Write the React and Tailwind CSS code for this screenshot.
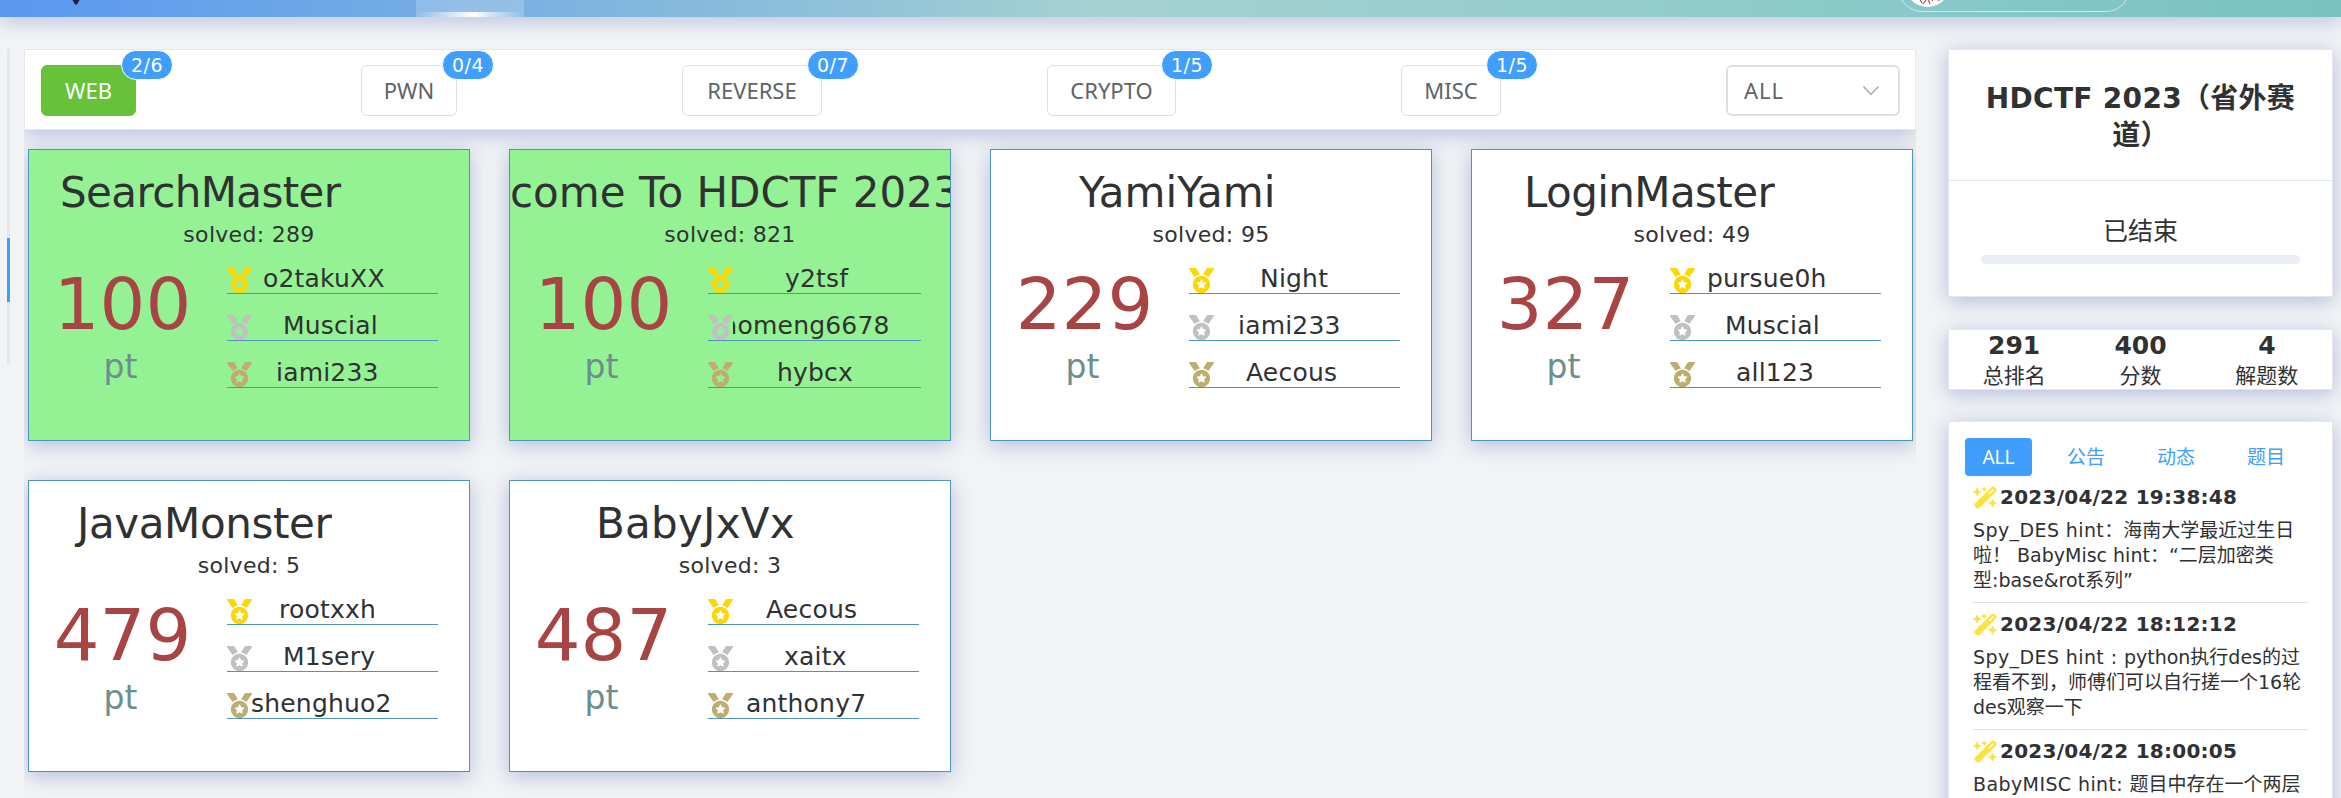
import { FaMedal } from "react-icons/fa";
import { FaWandMagicSparkles } from "react-icons/fa6";

const tabs = [
  { name: "WEB", count: "2/6", width: "w-[95px]", active: true },
  { name: "PWN", count: "0/4", width: "w-[96px]" },
  { name: "REVERSE", count: "0/7", width: "w-[140px]" },
  { name: "CRYPTO", count: "1/5", width: "w-[129px]" },
  { name: "MISC", count: "1/5", width: "w-[100px]" },
];

const challenges = [
  {
    title: "SearchMaster", place: "ml-[31px] tracking-[-0.6px]", solved: 289, points: 100, done: true,
    top: [["o2takuXX", "ml-[11px]"], ["Muscial", "ml-[31px]"], ["iami233", "ml-[24px]"]],
  },
  {
    title: "come To HDCTF 2023", place: "ml-0", solved: 821, points: 100, done: true, wide: true,
    top: [["y2tsf", "ml-[52px]"], ["aomeng6678", "-ml-[11px]"], ["hybcx", "ml-[44px]"]],
  },
  {
    title: "YamiYami", place: "ml-[88px]", solved: 95, points: 229,
    top: [["Night", "ml-[46px]"], ["iami233", "ml-[24px]"], ["Aecous", "ml-[32px]"]],
  },
  {
    title: "LoginMaster", place: "ml-[52px] tracking-[-0.6px]", solved: 49, points: 327,
    top: [["pursue0h", "ml-[12px]"], ["Muscial", "ml-[30px]"], ["all123", "ml-[41px]"]],
  },
  {
    title: "JavaMonster", place: "ml-[48px] tracking-[-0.4px]", solved: 5, points: 479,
    top: [["rootxxh", "ml-[27px]"], ["M1sery", "ml-[31px]"], ["shenghuo2", "-ml-px"]],
  },
  {
    title: "BabyJxVx", place: "ml-[86px] tracking-[0.25px]", solved: 3, points: 487,
    top: [["Aecous", "ml-[33px]"], ["xaitx", "ml-[51px]"], ["anthony7", "ml-[13px]"]],
  },
];

const medalColors = ["text-[#ffd700]", "text-[#c0c0c0]", "text-[#bfad6f]"];

const notices = [
  {
    time: "2023/04/22 19:38:48",
    lines: [["Spy_DES hint", "：海南大学最近过生日"], ["", "啦！ BabyMisc hint：“二层加密类"], ["", "型:base&rot系列”"]],
  },
  {
    time: "2023/04/22 18:12:12",
    lines: [["Spy_DES hint : ", "python执行des的过"], ["", "程看不到，师傅们可以自行搓一个16轮"], ["", "des观察一下"]],
  },
  {
    time: "2023/04/22 18:00:05",
    lines: [["BabyMISC hint: ", "题目中存在一个两层"]],
  },
];

const stats = [["291", "总排名"], ["400", "分数"], ["4", "解题数"]];

function Header() {
  return (
    <header className="relative z-10 h-[17px] shrink-0 bg-[linear-gradient(90deg,#5a97f0_0%,#8cbfda_34%,#a5d2d2_47%,#8ccaca_78%,#7ac1c1_100%)] shadow-[0_4px_20px_#b2bcdb]">
      <svg className="absolute left-[72px] top-0" width="8" height="5" viewBox="0 0 8 5">
        <path d="M0.5 0h7L5 4.5h-2z" fill="#1b2433" />
      </svg>
      <div className="ml-[416px] flex h-full w-[108px] flex-col justify-end bg-white/20">
        <div className="h-[5px] bg-[linear-gradient(90deg,rgba(255,255,255,0)_0%,rgba(255,255,255,0.65)_35%,#ffffff_54%,rgba(255,255,255,0.55)_70%,rgba(255,255,255,0)_100%)]" />
      </div>
      <div className="absolute inset-0 overflow-hidden">
        <div className="absolute -top-9 left-[1898px] h-12 w-[232px] rounded-full border-[1.5px] border-white/60">
          <svg className="absolute -top-[3px] left-1.5" width="45" height="45" viewBox="0 0 45 45">
            <circle cx="22.5" cy="22.5" r="22.5" fill="#fff" />
            <path d="M14 36l3 5M21 38l-3 4M23 37l2 5M29 36l-2 3M33 36l1 3" stroke="#9b5a55" strokeWidth="1.2" fill="none" />
          </svg>
        </div>
      </div>
    </header>
  );
}

function Toolbar() {
  return (
    <div className="flex h-[81px] shrink-0 items-start justify-between border border-[#e4e7ed] bg-white pl-4 pr-[15px] pt-[15px] font-['Noto_Sans',sans-serif] text-[22px] text-[#606266] shadow-[0_4px_20px_#b2bcdb]">
      {tabs.map((t) => (
        <div key={t.name} className="relative">
          <button
            className={`flex h-[51px] items-center justify-center rounded-[6px] border ${t.width} ${
              t.active ? "border-[#67c23a] bg-[#67c23a] text-white" : "border-[#dcdfe6] bg-white"
            }`}
          >
            {t.name}
          </button>
          <span className="absolute -right-[37px] -top-[15px] flex h-[30px] w-[52px] items-center justify-center rounded-full border-[1.5px] border-white bg-[#409eff] font-['DejaVu_Sans',sans-serif] text-[19px] leading-none tracking-[0.5px] text-white">
            {t.count}
          </span>
        </div>
      ))}
      <div className="flex h-[51px] w-[174px] items-center justify-between rounded-[6px] border-2 border-[#dcdfe6] pl-4 pr-[18px] tracking-[1px]">
        ALL
        <svg width="18" height="12" viewBox="0 0 18 12" fill="none" stroke="#a8abb2" strokeWidth="1.5">
          <path d="M1.5 1.5L9 9.5l7.5-8" />
        </svg>
      </div>
    </div>
  );
}

function ChallengeCard({ item }) {
  return (
    <article
      className={`h-[292px] w-[442px] border border-[#4e97b4] pt-[18px] shadow-[0_4px_20px_#b2bcdb] ${
        item.done ? "bg-[#94f294]" : "bg-white"
      }`}
    >
      <div className="h-[50px] overflow-hidden">
        <h2 className={`whitespace-nowrap text-[42px] leading-[50px] ${item.place}`}>{item.title}</h2>
      </div>
      <div className="mt-0.5 text-center text-[22px] leading-[30px] tracking-[0.3px]">solved: {item.solved}</div>
      <div className="flex">
        <div className="w-[185px] pt-3 text-center">
          <div className="pl-0.5 text-[72px] leading-[84px] text-[#a84444]">{item.points}</div>
          <div className="mt-px pr-0.5 text-[33px] leading-10 text-[#6b8e8e]">pt</div>
        </div>
        <ul className={`-mt-[3px] ml-[13px] ${item.wide ? "w-[213px]" : "w-[211px]"}`}>
          {item.top.map(([name, place], i) => (
            <li key={name} className="flex h-[47px] items-end border-b border-[#4e97b4]">
              <FaMedal size={25} className={`shrink-0 ${medalColors[i]}`} />
              <div className="flex-1 overflow-hidden">
                <div className={`whitespace-nowrap text-[25px] leading-7 tracking-[0.2px] ${place}`}>{name}</div>
              </div>
            </li>
          ))}
        </ul>
      </div>
    </article>
  );
}

function Sidebar() {
  return (
    <aside className="ml-8 flex w-[385px] shrink-0 flex-col">
      <section className="h-[248px] shrink-0 border border-[#e4e7ed] bg-white shadow-[0_4px_20px_#b2bcdb]">
        <h1 className="border-b border-[#e4e7ed] pb-[26px] pt-[30px] text-center text-[28px] font-bold leading-[37px] tracking-[0.3px]">
          HDCTF 2023（省外赛<br />道）
        </h1>
        <div className="px-8 pt-[33px] text-center text-[25px] leading-9">
          已结束
          <div className="mt-[5px] h-[9px] rounded-full bg-[#ebeef5]" />
        </div>
      </section>

      <section className="mt-8 grid h-[61px] shrink-0 grid-cols-3 border border-[#e4e7ed] bg-white px-[2px] pt-px text-center shadow-[0_4px_20px_#b2bcdb]">
        {stats.map(([value, label]) => (
          <div key={label}>
            <div className="text-[25px] font-bold leading-[30px]">{value}</div>
            <div className="mt-px text-[21px] leading-7">{label}</div>
          </div>
        ))}
      </section>

      <section className="mt-[31px] h-[420px] shrink-0 border border-[#e4e7ed] bg-white pl-4 pr-6 pt-4 shadow-[0_4px_20px_#b2bcdb]">
        <nav className="flex h-[38px] text-[19px] text-[#409eff]">
          <div className="mr-[9px] flex w-[67px] shrink-0 items-center justify-center rounded bg-[#409eff] font-['Noto_Sans',sans-serif] text-white">ALL</div>
          {["公告", "动态", "题目"].map((n) => (
            <div key={n} className="flex w-[90px] shrink-0 items-center justify-center">{n}</div>
          ))}
        </nav>
        <div className="pl-2">
          {notices.map((n) => (
            <div key={n.time} className="border-b border-[#dcdfe6] pb-[9px] pt-2">
              <div className="flex h-[26px] items-center whitespace-nowrap text-[20px] font-bold leading-[26px] tracking-[0.25px]">
                <FaWandMagicSparkles size={25} className="mr-0.5 shrink-0 text-[#fde23e]" />
                {n.time}
              </div>
              <div className="mt-2 text-[19px] leading-[25px]">
                {n.lines.map(([lead, rest]) => (
                  <div key={rest} className="whitespace-pre">
                    <span className="tracking-[0.4px]">{lead}</span>
                    {rest}
                  </div>
                ))}
              </div>
            </div>
          ))}
        </div>
      </section>
    </aside>
  );
}

export default function App() {
  return (
    <div className="flex h-[798px] w-[2341px] flex-col overflow-hidden bg-[#f2f3f5] font-['DejaVu_Sans','Noto_Sans_CJK_SC',sans-serif] text-[#303133]">
      <Header />
      <div className="flex min-h-0 flex-1 pt-8">
        <div className="ml-[7px] mr-[14px] h-[315px] w-[3px] shrink-0 bg-[#e4e7ed] pt-[189px]">
          <div className="h-16 bg-[#409eff]" />
        </div>
        <main className="flex w-[1892px] shrink-0 flex-col overflow-hidden">
          <Toolbar />
          <div className="grid grid-cols-[repeat(4,442px)] gap-[39px] pl-1 pt-[19px]">
            {challenges.map((c) => (
              <ChallengeCard key={c.title} item={c} />
            ))}
          </div>
        </main>
        <Sidebar />
      </div>
    </div>
  );
}
